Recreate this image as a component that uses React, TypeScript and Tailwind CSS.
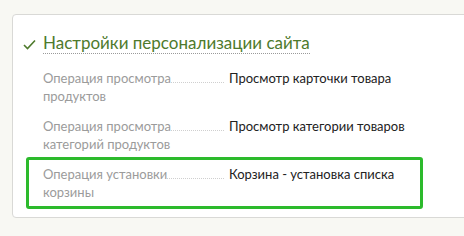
const rows = [
  { label: "Операция просмотра", rest: "продуктов", value: "Просмотр карточки товара" },
  { label: "Операция просмотра", rest: "категорий продуктов", value: "Просмотр категории товаров" },
  { label: "Операция установки", rest: "корзины", value: "Корзина - установка списка", active: true },
];

export default function App() {
  return (
    <div
      className="h-[236px] w-[464px] overflow-hidden bg-[#f8f8f3] pt-[14px] pl-[12px]"
      style={{ fontFamily: '"Lato", "Noto Sans", sans-serif' }}
    >
      <div className="h-[204px] w-[480px] rounded-[4px] border border-[#d9d9d6] bg-white pl-[13px] pt-[16px]">
        <div className="-ml-[3px] flex h-[24px] items-center">
          <svg width="13" height="11" viewBox="0 0 13 11" className="mr-[7px] mt-[2px]">
            <polyline points="1,6 4.5,9.5 12,1.5" fill="none" stroke="#4e7a2c" strokeWidth="1.6" />
          </svg>
          <span className="border-b border-dotted border-[#9a9a9a] text-[17px] leading-[21px] text-[#4e7a2c]">
            Настройки персонализации сайта
          </span>
        </div>
        <div className="mt-[6px] flex w-[397px] flex-col -space-y-1">
          {rows.map((r) => (
            <div
              key={r.value}
              className={`flex rounded-[3px] border-[3px] px-[14px] py-[5px] text-[13px] leading-[18px] ${
                r.active ? "border-[#2cba2c]" : "border-transparent"
              }`}
            >
              <div className="relative w-[181px] shrink-0 text-[#9b9b9b]">
                <div className="absolute left-0 right-0 top-[13px] border-b border-dotted border-[#cfcfcf]" />
                <span className="relative bg-white">{r.label}</span>
                <br />
                <span>{r.rest}</span>
              </div>
              <div className="ml-[5px] whitespace-nowrap text-[#222]">{r.value}</div>
            </div>
          ))}
        </div>
      </div>
    </div>
  );
}
